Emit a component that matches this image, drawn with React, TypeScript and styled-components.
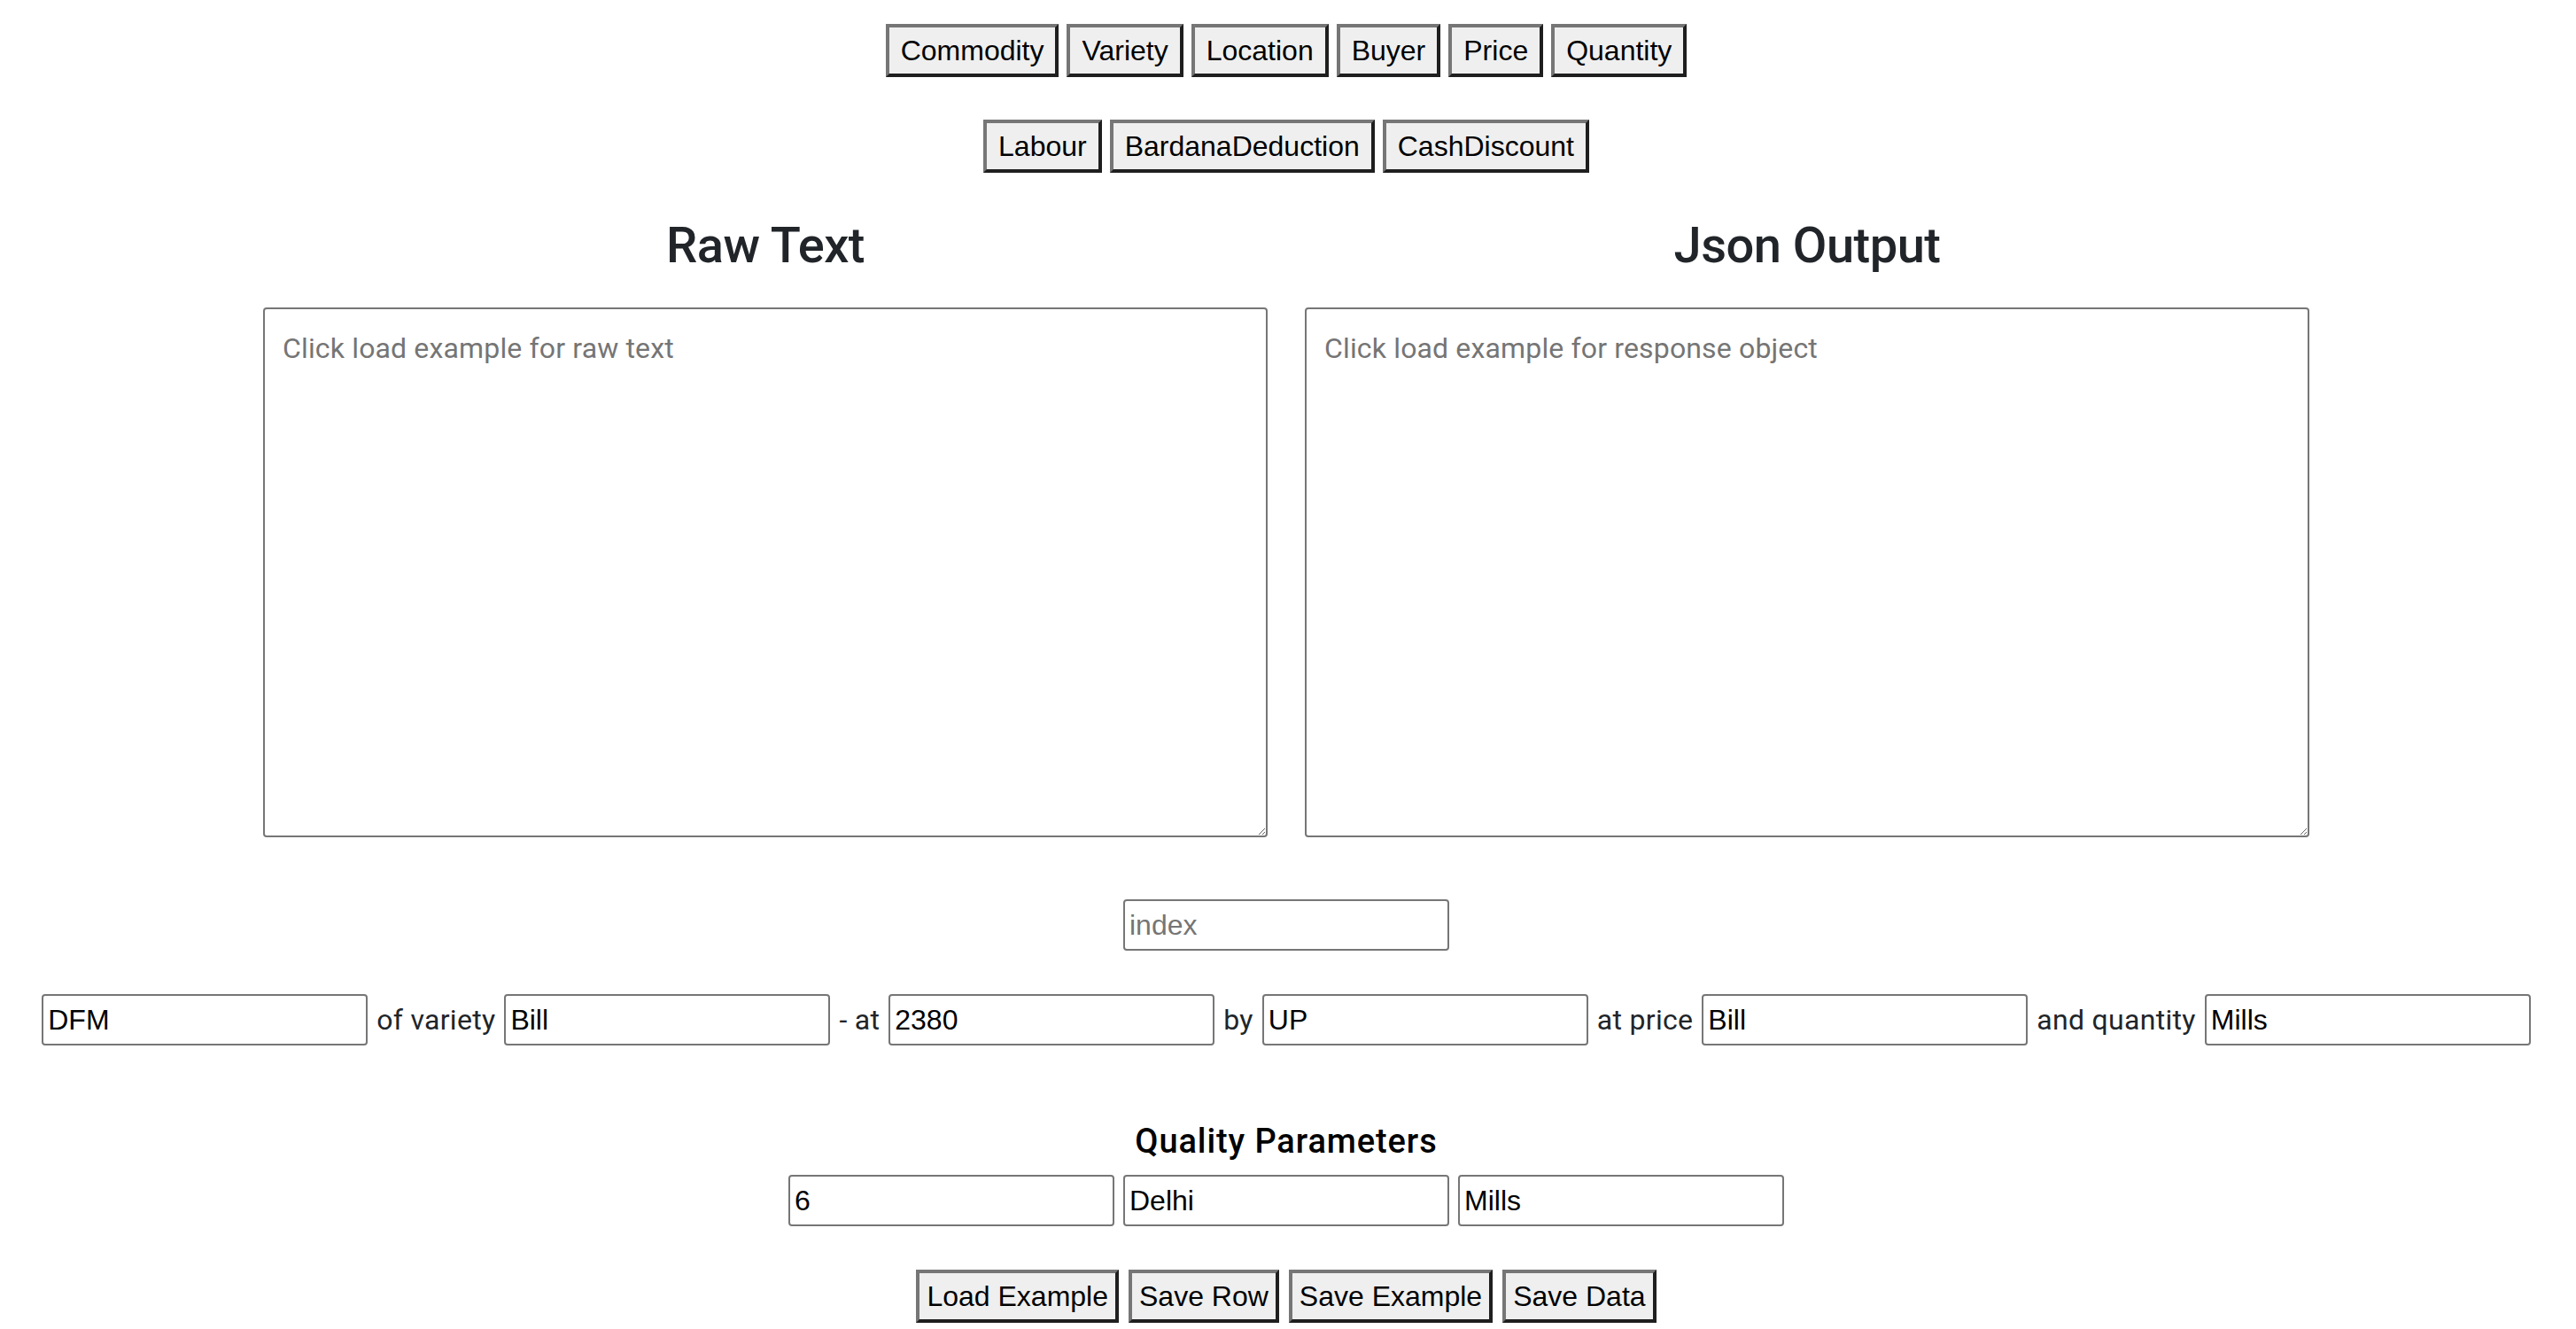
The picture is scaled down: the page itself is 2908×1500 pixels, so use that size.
import React from 'react';
import styled, { createGlobalStyle } from 'styled-components';

const GlobalStyle = createGlobalStyle`
  body {
    margin: 0;
    background: #ffffff;
    font-family: Roboto, "Liberation Sans", sans-serif;
    color: #212529;
  }
`;

const Page = styled.div`
  display: flex;
  flex-direction: column;
  align-items: center;
  padding: 27px 4px 6px 0;
`;

const ButtonRow = styled.div<{ $top?: number; $gap?: number }>`
  display: flex;
  justify-content: center;
  gap: ${(p) => p.$gap ?? 9}px;
  margin-top: ${(p) => p.$top ?? 0}px;
`;

const TagButton = styled.button<{ $compact?: boolean }>`
  height: 60px;
  padding: 0 ${(p) => (p.$compact ? 8 : 13)}px;
  font-family: "Liberation Sans", Arial, sans-serif;
  font-size: 32px;
  color: #000000;
  background: #efefef;
  border: 4px solid;
  border-color: #767676 #1f1f1f #1f1f1f #767676;
  border-radius: 0;
  cursor: pointer;
`;

const EditorGrid = styled.div`
  display: grid;
  grid-template-columns: repeat(2, 1176px);
  margin-top: 49px;
`;

const EditorColumn = styled.div`
  display: flex;
  flex-direction: column;
  align-items: center;
`;

const PanelTitle = styled.h3`
  margin: 0 0 36px;
  font-size: 56px;
  line-height: 67px;
  font-weight: 500;
  letter-spacing: -0.5px;
  color: #212529;
`;

const Editor = styled.textarea`
  width: 1134px;
  height: 598px;
  box-sizing: border-box;
  padding: 20px;
  border: 2px solid #767676;
  border-radius: 4px;
  font-family: Roboto, "Liberation Sans", sans-serif;
  font-size: 32px;
  line-height: 48px;
  letter-spacing: 0.15px;
  color: #212529;

  &::placeholder {
    color: #757575;
  }
`;

const Field = styled.input<{ $top?: number }>`
  flex-shrink: 0;
  width: 368px;
  height: 58px;
  box-sizing: border-box;
  margin-top: ${(p) => p.$top ?? 0}px;
  padding: 0 5px;
  border: 2px solid #767676;
  border-radius: 4px;
  font-family: "Liberation Sans", Arial, sans-serif;
  font-size: 32px;
  color: #000000;
  background: #ffffff;

  &::placeholder {
    color: #757575;
  }
`;

const SentenceRow = styled.div<{ $top?: number; $gap?: number }>`
  display: flex;
  align-items: center;
  justify-content: center;
  gap: ${(p) => p.$gap ?? 10}px;
  margin-top: ${(p) => p.$top ?? 0}px;
`;

const Joiner = styled.span`
  flex-shrink: 0;
  font-size: 32px;
  line-height: 48px;
  letter-spacing: 0.3px;
  color: #212529;
  white-space: nowrap;
`;

const SectionTitle = styled.h5`
  margin: 85px 0 15px;
  font-size: 38px;
  line-height: 46px;
  font-weight: 500;
  letter-spacing: 0.9px;
  color: #000000;
`;

const tags = ['Commodity', 'Variety', 'Location', 'Buyer', 'Price', 'Quantity'];
const extraTags = ['Labour', 'BardanaDeduction', 'CashDiscount'];

const sentence: { value: string; joiner?: string }[] = [
  { value: 'DFM', joiner: 'of variety' },
  { value: 'Bill', joiner: '- at' },
  { value: '2380', joiner: 'by' },
  { value: 'UP', joiner: 'at price' },
  { value: 'Bill', joiner: 'and quantity' },
  { value: 'Mills' },
];

const quality = ['6', 'Delhi', 'Mills'];

const actions = ['Load Example', 'Save Row', 'Save Example', 'Save Data'];

export default function App() {
  return (
    <>
      <GlobalStyle />
      <Page>
        <ButtonRow>
          {tags.map((t) => (
            <TagButton key={t}>{t}</TagButton>
          ))}
        </ButtonRow>
        <ButtonRow $top={48}>
          {extraTags.map((t) => (
            <TagButton key={t}>{t}</TagButton>
          ))}
        </ButtonRow>

        <EditorGrid>
          <EditorColumn>
            <PanelTitle>Raw Text</PanelTitle>
            <Editor placeholder="Click load example for raw text" />
          </EditorColumn>
          <EditorColumn>
            <PanelTitle>Json Output</PanelTitle>
            <Editor placeholder="Click load example for response object" />
          </EditorColumn>
        </EditorGrid>

        <Field $top={70} placeholder="index" />

        <SentenceRow $top={49}>
          {sentence.map((s, i) => (
            <React.Fragment key={i}>
              <Field defaultValue={s.value} />
              {s.joiner && <Joiner>{s.joiner}</Joiner>}
            </React.Fragment>
          ))}
        </SentenceRow>

        <SectionTitle>Quality Parameters</SectionTitle>
        <SentenceRow>
          {quality.map((q, i) => (
            <Field key={i} defaultValue={q} />
          ))}
        </SentenceRow>

        <ButtonRow $top={49} $gap={11}>
          {actions.map((a) => (
            <TagButton key={a} $compact>
              {a}
            </TagButton>
          ))}
        </ButtonRow>
      </Page>
    </>
  );
}
